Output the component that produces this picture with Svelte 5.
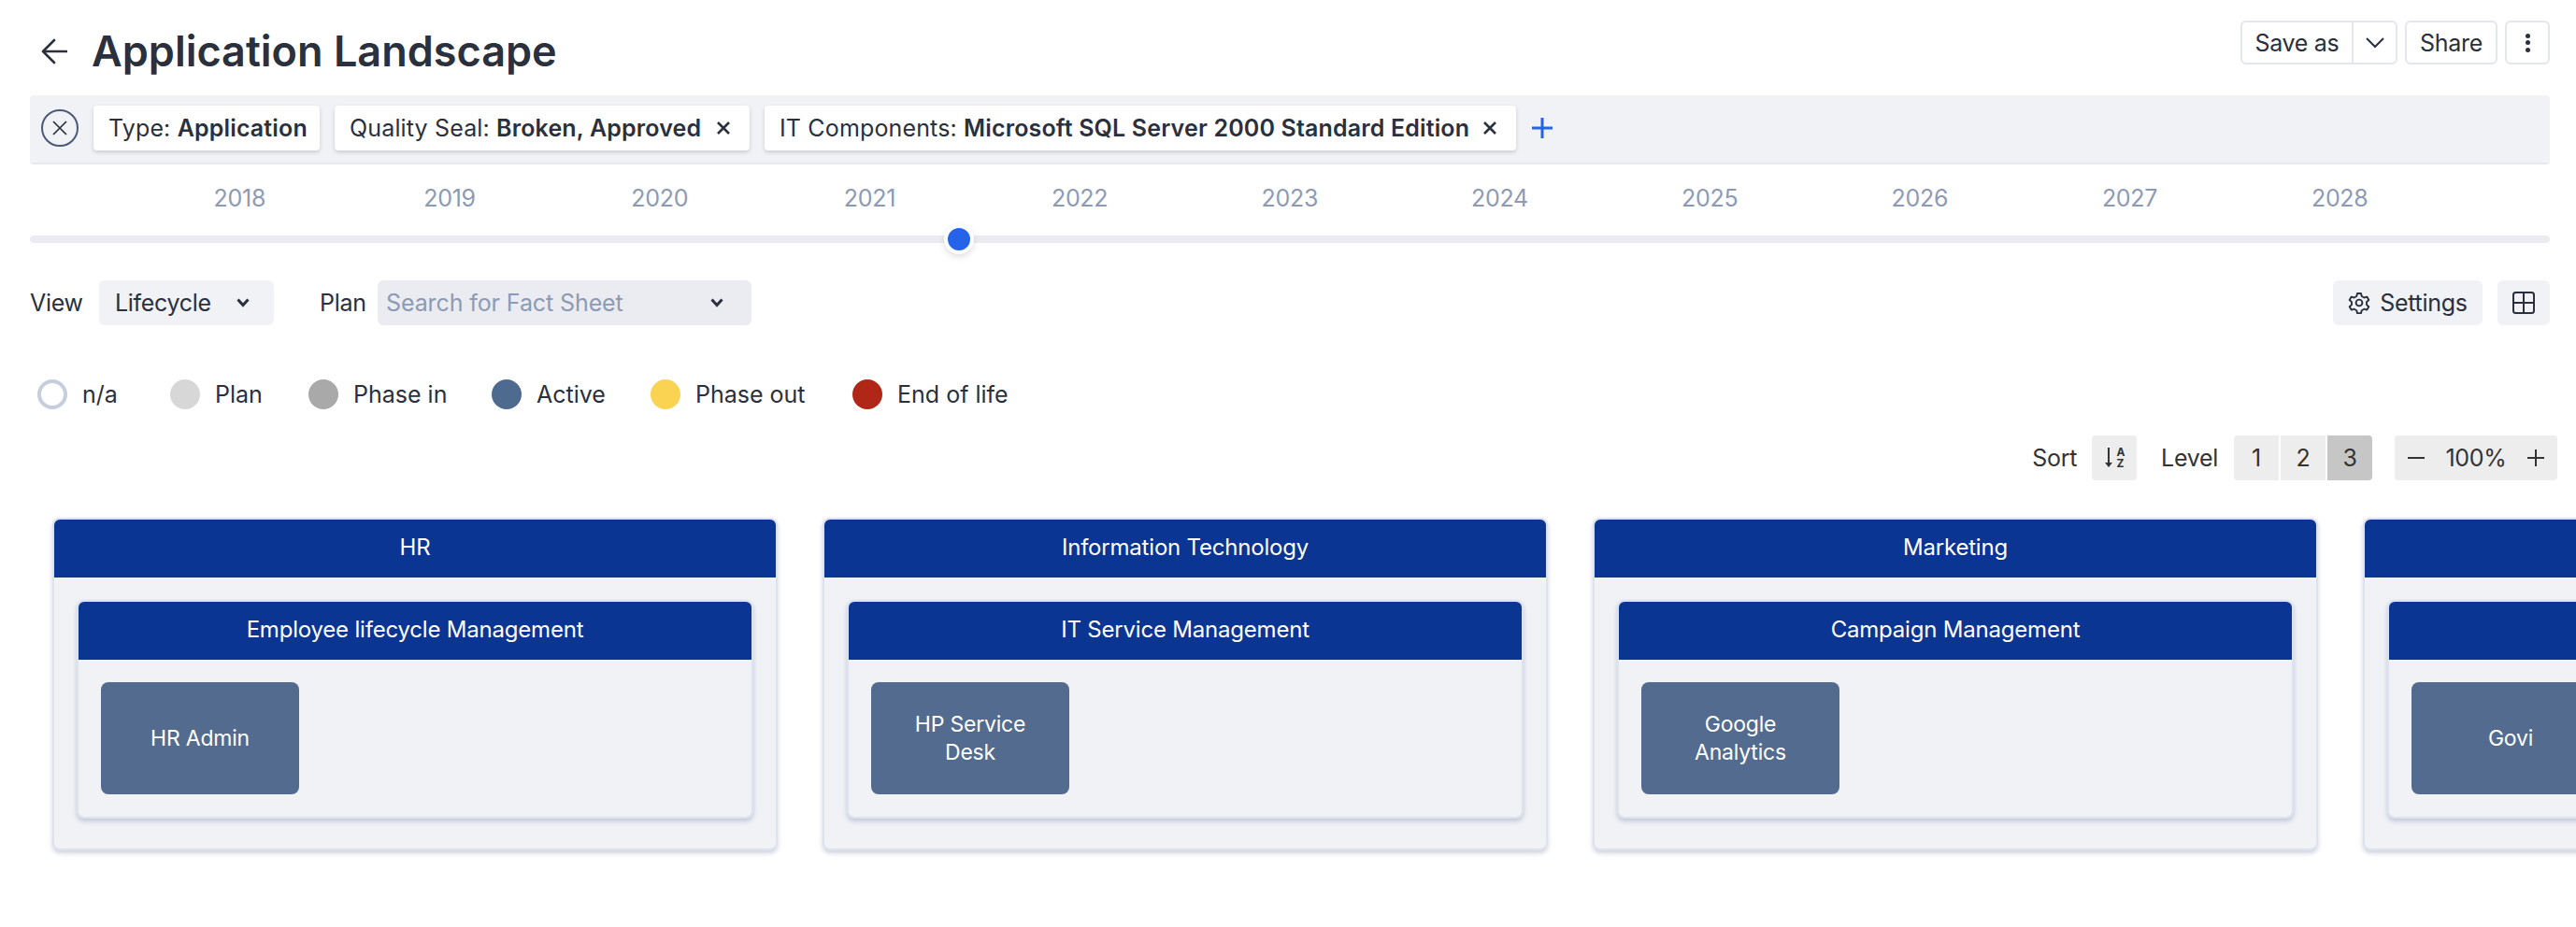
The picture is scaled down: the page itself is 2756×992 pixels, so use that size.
<script>
  const chips = [
    { label: 'Type:', value: 'Application', width: 242, close: false },
    { label: 'Quality Seal:', value: 'Broken, Approved', width: 444, close: true },
    { label: 'IT Components:', value: 'Microsoft SQL Server 2000 Standard Edition', width: 804, close: true }
  ];
  const years = [2018, 2019, 2020, 2021, 2022, 2023, 2024, 2025, 2026, 2027, 2028];
  const legend = [
    { name: 'n/a', cls: 'na', width: 142 },
    { name: 'Plan', cls: 'plan', width: 148 },
    { name: 'Phase in', cls: 'phasein', width: 196 },
    { name: 'Active', cls: 'active', width: 170 },
    { name: 'Phase out', cls: 'phaseout', width: 216 },
    { name: 'End of life', cls: 'eol', width: 200 }
  ];
  const groups = [
    { title: 'HR', sub: 'Employee lifecycle Management', app: 'HR Admin' },
    { title: 'Information Technology', sub: 'IT Service Management', app: 'HP Service Desk' },
    { title: 'Marketing', sub: 'Campaign Management', app: 'Google Analytics' },
    { title: '', sub: '', app: 'Govi' }
  ];
</script>

<div class="page">
  <header class="top">
    <div class="heading">
      <svg class="back" viewBox="0 0 28 28" width="28" height="28" fill="none" stroke="#2a303d" stroke-width="2.6" stroke-linecap="round" stroke-linejoin="round"><path d="M27 14H2M14 2 2 14l12 12"/></svg>
      <h1>Application Landscape</h1>
    </div>
    <div class="actions">
      <div class="btn split">
        <span class="save">Save as</span>
        <span class="caret"><svg viewBox="0 0 20 12" width="20" height="12" fill="none" stroke="#2a303d" stroke-width="2"><path d="M1 1l9 9 9-9"/></svg></span>
      </div>
      <div class="btn share">Share</div>
      <div class="btn more"><i></i><i></i><i></i></div>
    </div>
  </header>

  <section class="filters">
    <span class="clear"><svg viewBox="0 0 16 16" width="16" height="16" fill="none" stroke="#2a303d" stroke-width="1.7"><path d="M1 1l14 14M15 1 1 15"/></svg></span>
    {#each chips as c}
      <div class="chip" style="width:{c.width}px">
        <span>{c.label} <b>{c.value}</b></span>
        {#if c.close}
          <svg class="x" viewBox="0 0 14 14" width="14" height="14" fill="none" stroke="#2a303d" stroke-width="2.6"><path d="M1 1l12 12M13 1 1 13"/></svg>
        {/if}
      </div>
    {/each}
    <svg class="plus" viewBox="0 0 22 22" width="22" height="22" fill="none" stroke="#2563e8" stroke-width="3"><path d="M11 0v22M0 11h22"/></svg>
  </section>

  <div class="years">
    {#each years as y}<span>{y}</span>{/each}
  </div>
  <div class="track"><span class="thumb"></span></div>

  <div class="viewrow">
    <div class="viewleft">
      <span class="lbl">View</span>
      <div class="select life">
        <span>Lifecycle</span>
        <svg viewBox="0 0 14 10" width="14" height="10" fill="none" stroke="#2a303d" stroke-width="3"><path d="M1.5 1.5 7 7.5l5.5-6"/></svg>
      </div>
      <span class="lbl planlbl">Plan</span>
      <div class="select search">
        <span>Search for Fact Sheet</span>
        <svg viewBox="0 0 14 10" width="14" height="10" fill="none" stroke="#2a303d" stroke-width="3"><path d="M1.5 1.5 7 7.5l5.5-6"/></svg>
      </div>
    </div>
    <div class="viewright">
      <div class="soft settings">
        <svg viewBox="0 0 24 24" width="24" height="24" fill="none" stroke="#2a303d" stroke-width="1.9" stroke-linejoin="round"><circle cx="12" cy="12" r="3.4"/><path d="M10 2h4l.7 3 2.6 1.5 3-.9 2 3.4-2.300 2.100v3l2.300 2.100-2 3.400-3-.9-2.600 1.500-.7 3h-4l-.7-3-2.600-1.500-3 .9-2-3.400 2.300-2.100v-3L1.700 9l2-3.400 3 .9L9.300 5z"/></svg>
        <span>Settings</span>
      </div>
      <div class="soft grid">
        <svg viewBox="0 0 24 24" width="24" height="24" fill="none" stroke="#2a303d" stroke-width="2"><rect x="1" y="1" width="22" height="22" rx="2.500"/><path d="M12 1v22M1 12h22"/></svg>
      </div>
    </div>
  </div>

  <div class="legend">
    {#each legend as l}
      <div class="item" style="width:{l.width}px"><span class="dot {l.cls}"></span><span>{l.name}</span></div>
    {/each}
  </div>

  <div class="controls">
    <span>Sort</span>
    <div class="gray sort">
      <svg viewBox="0 0 10 22" width="10" height="22" fill="none" stroke="#333" stroke-width="2"><path d="M5 0v19"/><path d="M1 16h8l-4 5z" fill="#333" stroke="none"/></svg>
      <span class="az"><span>A</span><span>Z</span></span>
    </div>
    <span class="level">Level</span>
    <div class="levels">
      <span class="gray">1</span><span class="gray">2</span><span class="gray sel">3</span>
    </div>
    <div class="gray zoom">
      <svg viewBox="0 0 18 2" width="18" height="2"><rect width="18" height="2" fill="#333"/></svg>
      <span>100%</span>
      <svg viewBox="0 0 18 18" width="18" height="18" fill="none" stroke="#333" stroke-width="2"><path d="M9 0v18M0 9h18"/></svg>
    </div>
  </div>

  <div class="board">
    {#each groups as g}
      <article class="card">
        <div class="bar">{g.title}</div>
        <div class="cardbody">
          <div class="inner">
            <div class="bar">{g.sub}</div>
            <div class="innerbody">
              <div class="tile">{g.app}</div>
            </div>
          </div>
        </div>
      </article>
    {/each}
  </div>
</div>

<style>
  :global(body) { margin: 0; overflow: hidden; background: #fff; }
  .page {
    width: 2756px; height: 992px; overflow: hidden; box-sizing: border-box;
    padding: 22px 28px 0 32px;
    font-family: Inter, "Noto Sans", sans-serif; font-size: 25px; color: #2a303d;
    letter-spacing: -0.3px;
  }
  .top { display: flex; justify-content: space-between; align-items: flex-start; height: 80px; }
  .heading { display: flex; align-items: center; gap: 26px; margin: 13px 0 0 12px; }
  .back { flex: none; }
  h1 { margin: 0; font-size: 45px; line-height: 40px; font-weight: 600; letter-spacing: 0; }
  .actions { display: flex; gap: 8px; }
  .btn {
    box-sizing: border-box; height: 47px; border: 2px solid #e3e6ec; border-radius: 6px;
    display: flex; align-items: center; justify-content: center;
  }
  .split { width: 168px; }
  .save { flex: 1; height: 100%; display: flex; align-items: center; justify-content: center; border-right: 2px solid #e3e6ec; }
  .caret { width: 45px; display: flex; justify-content: center; }
  .share { width: 99px; }
  .more { width: 48px; flex-direction: column; gap: 2.5px; }
  .more i { width: 5px; height: 5px; border-radius: 50%; background: #2a303d; }

  .filters {
    box-sizing: border-box; height: 74px; background: #f0f2f6; border-bottom: 2px solid #e6e8ee; border-radius: 4px;
    display: flex; align-items: center; gap: 16px; padding: 0 12px 2px 12px;
  }
  .clear {
    box-sizing: border-box; width: 40px; height: 40px; border: 2px solid #4a5a78; border-radius: 50%;
    display: flex; align-items: center; justify-content: center; flex: none; margin-right: 0;
  }
  .chip {
    box-sizing: border-box; height: 48px; background: #fff; border-radius: 4px;
    box-shadow: 0 2px 4px rgba(42, 48, 61, 0.2); letter-spacing: 0.15px;
    display: flex; align-items: center; justify-content: space-between; padding: 0 21px 0 16px; flex: none; white-space: nowrap;
  }
  .chip b { font-weight: 600; }
  .plus { margin-left: 1px; }

  .years { display: grid; grid-template-columns: repeat(11, 224.7px); margin: 18px 0 0 112px; height: 36px; line-height: 36px; color: #8d9ab5; text-align: center; }
  .track { position: relative; height: 8px; background: #eaecf1; border-radius: 4px; margin-top: 22px; }
  .thumb {
    position: absolute; left: 978px; top: -12px; width: 24px; height: 24px; box-sizing: content-box;
    border: 4px solid #fff; border-radius: 50%; background: #2563e8; box-shadow: 0 3px 6px rgba(42, 48, 61, 0.15);
  }

  .viewrow { display: flex; justify-content: space-between; margin-top: 40px; height: 48px; }
  .viewleft, .viewright { display: flex; align-items: center; }
  .lbl { width: 74px; }
  .planlbl { width: 62px; margin-left: 49px; }
  .select { box-sizing: border-box; height: 48px; border-radius: 6px; display: flex; align-items: center; justify-content: space-between; }
  .life { width: 187px; background: #f0f2f6; padding: 0 26px 0 17px; }
  .search { width: 400px; background: #eaecf1; color: #8d9ab5; padding: 0 30px 0 9px; letter-spacing: -0.1px; }
  .soft { box-sizing: border-box; height: 48px; background: #f0f2f6; border-radius: 6px; display: flex; align-items: center; justify-content: center; }
  .settings { width: 160px; gap: 10px; }
  .grid { width: 56px; margin-left: 16px; }

  .legend { display: flex; margin: 58px 0 0 8px; height: 32px; letter-spacing: 0; }
  .item { display: flex; align-items: center; gap: 16px; flex: none; box-sizing: border-box; }
  .dot { box-sizing: border-box; width: 32px; height: 32px; border-radius: 50%; flex: none; }
  .na { border: 4px solid #c6cedd; }
  .plan { background: #d7d7d7; }
  .phasein { background: #a9a9a9; }
  .active { background: #4f6a8f; }
  .phaseout { background: #fad352; }
  .eol { background: #b02617; }

  .controls { display: flex; justify-content: flex-end; align-items: center; height: 48px; margin: 28px -8px 0 0; color: #333; }
  .gray { background: #ededed; height: 48px; display: flex; align-items: center; justify-content: center; }
  .sort { width: 48px; margin-left: 16px; border-radius: 4px; gap: 4px; }
  .az { display: flex; flex-direction: column; font-size: 12px; font-weight: 700; line-height: 12px; letter-spacing: 0; }
  .level { margin-left: 26px; }
  .levels { display: flex; gap: 2px; margin-left: 17px; }
  .levels .gray { width: 48px; }
  .levels .gray:first-child { border-radius: 4px 0 0 4px; }
  .levels .gray:last-child { border-radius: 0 4px 4px 0; }
  .sel { background: #c6c6c6 !important; }
  .zoom { width: 174px; margin-left: 24px; border-radius: 4px; justify-content: space-between; padding: 0 14px; box-sizing: border-box; }

  .board { display: flex; gap: 48px; margin: 40px 0 0 24px; width: 3400px; }
  .card, .inner {
    box-sizing: border-box; background: #f0f2f6; border: 2px solid #dde2ec; border-radius: 8px;
    box-shadow: 0 3px 5px rgba(110, 125, 160, 0.35); flex: none; color: #fff; text-align: center;
  }
  .card { width: 776px; height: 356px; }
  .inner { width: 724px; height: 234px; }
  .bar { height: 62px; line-height: 60px; background: #0b3592; border-radius: 6px 6px 0 0; font-size: 24px; letter-spacing: -0.2px; white-space: nowrap; }
  .cardbody { padding: 24px; }
  .innerbody { padding: 24px; }
  .tile {
    box-sizing: border-box; width: 212px; height: 120px; background: #526b8e; border-radius: 8px;
    display: flex; align-items: center; justify-content: center; padding: 0 24px; line-height: 30px; font-size: 23px; letter-spacing: -0.2px;
  }
</style>
